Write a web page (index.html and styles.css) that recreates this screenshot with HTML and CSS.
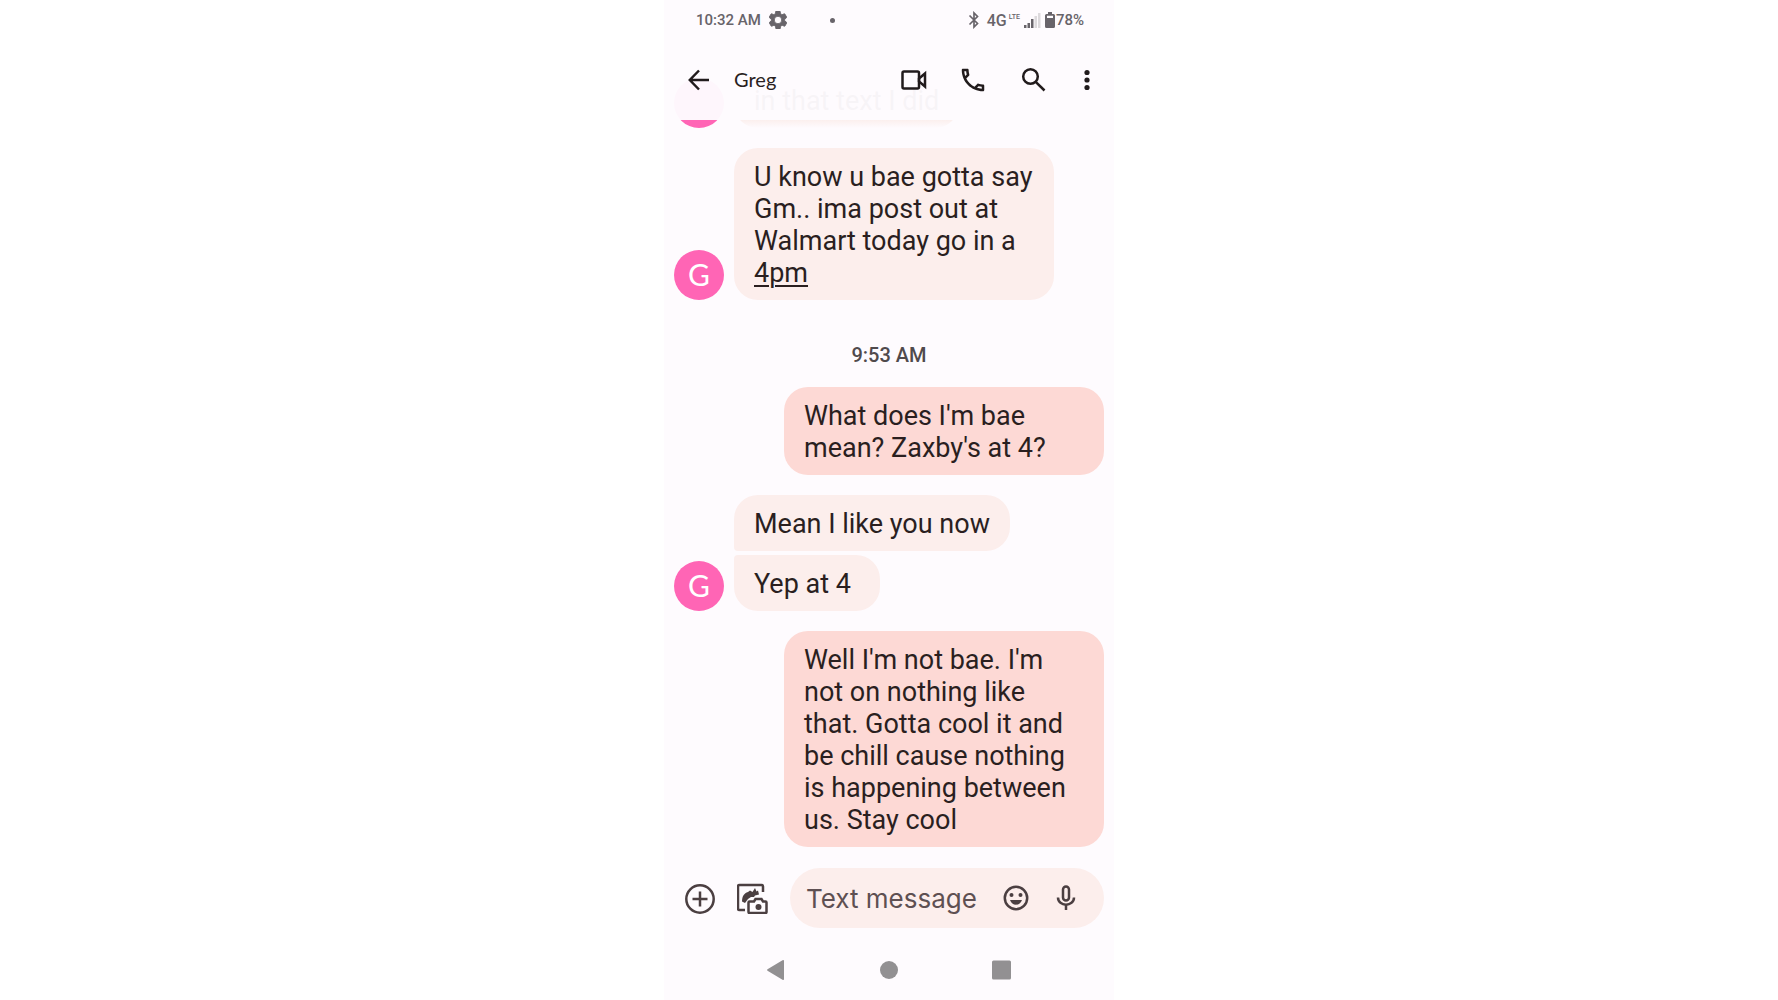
FILE: index.html
```html
<!DOCTYPE html>
<html lang="en">
<head>
    <meta charset="UTF-8">
    <meta name="viewport" content="width=device-width, initial-scale=1.0">
    <title>Greg</title>
    <link rel="stylesheet" href="styles.css">
</head>
<body>
    <div class="phone">
        <header class="top">
            <div class="status-bar">
                <span>10:32 AM</span>
                <svg class="gear" width="18" height="18" viewBox="2 2 20 20"><path fill="currentColor" stroke="currentColor" fill-rule="evenodd" d="M19.4 13a7 7 0 0 0 0-2l2.100-1.600a.5.5 0 0 0 .1-.6l-2-3.500a.5.5 0 0 0-.6-.2l-2.500 1a7.300 7.300 0 0 0-1.700-1l-.4-2.600a.5.5 0 0 0-.5-.5h-4a.5.500 0 0 0-.4.400l-.4 2.700a7.700 7.700 0 0 0-1.700 1l-2.500-1a.5.5 0 0 0-.6.200l-2 3.500a.5.5 0 0 0 .1.600L4.600 11a8 8 0 0 0 0 2l-2.100 1.600a.5.5 0 0 0-.1.600l2 3.500c.1.200.4.300.6.200l2.500-1c.5.400 1.100.7 1.700 1l.4 2.600c0 .3.200.5.4.5h4c.3 0 .5-.2.5-.5l.4-2.600c.6-.3 1.200-.6 1.700-1l2.500 1c.2.100.5 0 .6-.2l2-3.500a.5.5 0 0 0-.1-.6zM12 16.200a4.200 4.200 0 1 1 0-8.400 4.200 4.200 0 0 1 0 8.400z"/></svg>
                <span class="dot"></span>
                <div class="status-right">
                    <svg width="12" height="18" viewBox="0 0 12 18"><path fill="none" stroke="currentColor" stroke-width="1.700" d="M1.500 4.500l8 8L6 16V2l3.500 3.500-8 8"/></svg>
                    <span class="network">4G</span>
                    <span class="lte">LTE</span>
                    <svg width="18" height="16" viewBox="0 0 18 16"><g fill="currentColor"><path d="M1 13h2.500v3H1zM4.500 11h2.500v5H4.500zM8 7h2.500v9H8z"/><path opacity=".22" d="M11.500 4H14v12h-2.500zM15 1h2.500v15H15z"/></g></svg>
                    <svg class="battery" width="10" height="16" viewBox="0 0 10 16"><path fill="currentColor" fill-rule="evenodd" d="M3 0h4v2h1.500Q10 2 10 3.500v11Q10 16 8.500 16h-7Q0 16 0 14.500v-11Q0 2 1.500 2H3zM2 3.700V6h6V3.700z"/></svg>
                    <span>78%</span>
                </div>
            </div>
            <div class="app-bar">
                <button class="icon-btn" aria-label="Back">
                    <svg width="30" height="30" viewBox="0 0 30 30"><path d="M25 15H6.500M15 5.500L5.800 15l9.200 9.500"/></svg>
                </button>
                <h1>Greg</h1>
                <button class="icon-btn" aria-label="Video call">
                    <svg width="30" height="30" viewBox="0 0 30 30"><rect x="4.500" y="6.500" width="16.500" height="17" rx="1.500"/><path d="M21 13.500l6-5v13l-6-5z"/></svg>
                </button>
                <button class="icon-btn" aria-label="Call">
                    <svg class="solid" width="30" height="30" viewBox="0 0 24 24"><path d="M6.540 5c.06.890.210 1.760.450 2.590l-1.200 1.200c-.410-1.200-.670-2.470-.760-3.790h1.510m9.860 12.020c.850.240 1.720.390 2.600.450v1.490c-1.320-.090-2.590-.350-3.800-.750l1.200-1.190M7.500 3H4c-.550 0-1 .450-1 1 0 9.390 7.610 17 17 17 .550 0 1-.450 1-1v-3.490c0-.550-.450-1-1-1-1.240 0-2.450-.200-3.570-.570a.84.84 0 0 0-.310-.050c-.260 0-.510.100-.710.290l-2.200 2.200a15.150 15.150 0 0 1-6.590-6.590l2.200-2.200c.280-.280.360-.670.250-1.020A11.360 11.360 0 0 1 8.500 4c0-.550-.450-1-1-1z"/></svg>
                </button>
                <button class="icon-btn" aria-label="Search">
                    <svg width="30" height="30" viewBox="0 0 30 30"><circle cx="12.500" cy="11.500" r="7.300"/><path d="M17.700 16.800L26.500 25.500"/></svg>
                </button>
                <button class="icon-btn more" aria-label="More options">
                    <svg class="solid" width="18" height="30" viewBox="0 0 18 30"><circle cx="9" cy="7.500" r="2.600"/><circle cx="9" cy="15" r="2.600"/><circle cx="9" cy="22.500" r="2.600"/></svg>
                </button>
            </div>
        </header>

        <main class="chat">
            <div class="row scrolled">
                <span class="avatar"></span>
                <p class="bubble">in that text I did</p>
            </div>
            <div class="row">
                <span class="avatar">G</span>
                <p class="bubble">U know u bae gotta say Gm.. ima post out at Walmart today go in a <a href="#">4pm</a></p>
            </div>
            <time class="time">9:53 AM</time>
            <div class="row sent">
                <p class="bubble">What does I'm bae mean? Zaxby's at 4?</p>
            </div>
            <div class="row">
                <span class="avatar">G</span>
                <div class="group">
                    <p class="bubble">Mean I like you now</p>
                    <p class="bubble">Yep at 4</p>
                </div>
            </div>
            <div class="row sent">
                <p class="bubble">Well I'm not bae. I'm not on nothing like that. Gotta cool it and be chill cause nothing is happening between us. Stay cool</p>
            </div>
        </main>

        <form class="composer">
            <button type="button" class="icon-btn" aria-label="Attach">
                <svg width="32" height="32" viewBox="0 0 32 32"><circle cx="16" cy="17" r="13.700"/><path d="M16 9.500v15M8.500 17h15"/></svg>
            </button>
            <button type="button" class="icon-btn gallery" aria-label="Gallery">
                <svg width="32" height="32" viewBox="0 0 32 32"><path d="M26 10V4.500Q26 3 24.500 3h-22Q1 3 1 4.500v22Q1 28 2.500 28H8"/><path d="M12.500 19.500H17l1.500-2.500h6l1.500 2.500h2.500q1 0 1 1V30q0 1-1 1h-16q-1 0-1-1v-9.500q0-1 1-1z"/><path class="fill" d="M5 19.500c0-5 2-8.500 6-9.500l2-1.500 2.500 1.500 2.500-4 1.500 3.500 1.500-1 1 4-4 1-1 1.500h-3l-3 2-3 4z"/><circle class="fill" cx="21.500" cy="25" r="3"/></svg>
            </button>
            <div class="field">
                <input type="text" placeholder="Text message" aria-label="Text message">
                <button type="button" class="icon-btn" aria-label="Emoji">
                    <svg width="30" height="30" viewBox="0 0 30 30"><circle cx="15" cy="15" r="11.200"/><circle class="fill" cx="10.500" cy="12" r="2"/><circle class="fill" cx="19.500" cy="12" r="2"/><path class="fill" d="M9 17h12c-1 3-3.300 4.700-6 4.700S10 20 9 17z"/></svg>
                </button>
                <button type="button" class="icon-btn" aria-label="Voice message">
                    <svg width="30" height="30" viewBox="0 0 30 30"><rect x="12" y="3.500" width="6" height="14" rx="3"/><path d="M7 14.500c0 9.500 16 9.500 16 0M15 21.500V27"/></svg>
                </button>
            </div>
        </form>

        <nav class="system-nav">
            <button aria-label="Back"><svg width="32" height="32" viewBox="0 0 32 32"><path d="M7.500 15.200L22.500 6.300q1.500-.8 1.500.7v18q0 1.500-1.500.7L7.500 16.800q-1-.8 0-1.600z"/></svg></button>
            <button aria-label="Home"><svg width="32" height="32" viewBox="0 0 32 32"><circle cx="16" cy="16" r="9"/></svg></button>
            <button aria-label="Recent apps"><svg width="32" height="32" viewBox="0 0 32 32"><rect x="6" y="6.500" width="19" height="19" rx="1.500"/></svg></button>
        </nav>
    </div>
</body>
</html>
```

FILE: styles.css
```css
* {
    margin: 0;
    padding: 0;
    box-sizing: border-box;
}
body {
    font-family: Roboto, "Liberation Sans", sans-serif;
    background-color: #fff;
    color: #2a1f1f;
}
button {
    border: none;
    background: none;
    cursor: pointer;
}
svg {
    display: block;
}
.phone {
    display: flex;
    flex-direction: column;
    max-width: 450px;
    min-height: 100vh;
    margin: 0 auto;
    background-color: #fefbfe;
}
.top {
    position: sticky;
    top: 0;
    z-index: 10;
    background-color: rgba(254, 251, 254, 0.97);
}
.status-bar {
    display: flex;
    align-items: center;
    height: 40px;
    padding: 0 30px 0 32px;
    font-size: 15px;
    font-weight: 500;
    color: #68646a;
}
.gear {
    margin-left: 8px;
}
.dot {
    width: 5px;
    height: 5px;
    margin-left: 43px;
    border-radius: 50%;
    background-color: #68646a;
}
.status-right {
    display: flex;
    align-items: center;
    margin-left: auto;
}
.network {
    margin-left: 7px;
    font-size: 16px;
}
.lte {
    margin: 0 3px 0 2px;
    padding-bottom: 6px;
    font-size: 7px;
}
.battery {
    margin: 0 1px 0 4px;
}
.app-bar {
    display: flex;
    align-items: center;
    gap: 30px;
    height: 80px;
    padding: 0 18px 0 20px;
}
.app-bar h1 {
    flex: 1;
    margin-left: -10px;
    font-family: Lato, sans-serif;
    font-size: 20px;
    font-weight: 400;
    line-height: 24px;
    padding-bottom: 2px;
}
.icon-btn {
    flex: none;
    color: #211b1c;
}
.icon-btn svg {
    fill: none;
    stroke: currentColor;
    stroke-width: 2.500;
}
.icon-btn .solid,
.icon-btn .fill {
    fill: currentColor;
    stroke: none;
}
.icon-btn svg.solid {
    fill: currentColor;
    stroke: none;
}
.chat {
    flex: 1;
    display: flex;
    flex-direction: column;
    gap: 20px;
    padding: 0 10px;
}
.row {
    display: flex;
    align-items: flex-end;
    gap: 10px;
}
/* last message left under the translucent header */
.scrolled {
    margin-top: -48px;
}
.avatar {
    flex: none;
    width: 50px;
    height: 50px;
    border-radius: 50%;
    background-color: #ff65b5;
    color: #fff;
    font-family: Lato, sans-serif;
    font-size: 30px;
    line-height: 48px;
    text-align: center;
}
.bubble {
    min-width: 146px;
    max-width: 320px;
    padding: 13px 20px 11px;
    border-radius: 24px;
    background-color: #fceeec;
    font-size: 27px;
    line-height: 32px;
}
.scrolled .bubble {
    background: linear-gradient(#fbeeec 84%, #fefbfe);
}
.bubble a {
    color: inherit;
    text-decoration-thickness: 2px;
    text-underline-offset: 3px;
}
.group {
    display: flex;
    flex-direction: column;
    align-items: flex-start;
    gap: 4px;
}
.group .bubble:first-child {
    border-bottom-left-radius: 4px;
}
.group .bubble:last-child {
    border-top-left-radius: 4px;
}
.sent {
    justify-content: flex-end;
}
.sent .bubble {
    width: 320px;
    background-color: #fdd9d5;
}
.time {
    padding-top: 23px;
    color: #504a4c;
    font-size: 20px;
    font-weight: 500;
    line-height: 24px;
    text-align: center;
}
.composer {
    display: flex;
    align-items: center;
    gap: 21px;
    padding: 20px 10px 12px 20px;
}
.composer .icon-btn {
    color: #4b3f41;
}
.field {
    flex: 1;
    display: flex;
    align-items: center;
    gap: 20px;
    height: 60px;
    min-width: 0;
    padding: 0 23px 0 16px;
    border-radius: 30px;
    background-color: #fceeec;
}
.field input {
    flex: 1;
    min-width: 0;
    border: none;
    outline: none;
    background: none;
    color: #2a1f1f;
    font-family: Inter, sans-serif;
    font-size: 26px;
}
.field input::placeholder {
    color: #5e5052;
    opacity: 1;
}
.system-nav {
    display: flex;
    justify-content: center;
    align-items: center;
    gap: 81px;
    height: 60px;
}
.system-nav svg {
    fill: #929092;
}
```
